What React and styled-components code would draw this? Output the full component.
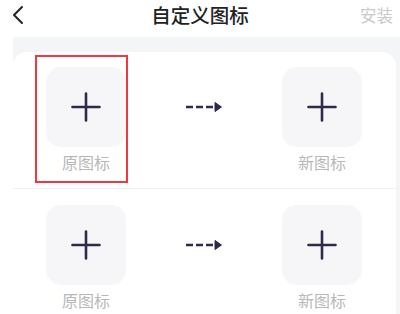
import React from "react";
import styled, { createGlobalStyle } from "styled-components";

const Global = createGlobalStyle`
  html, body { margin: 0; padding: 0; background: #ffffff; }
  body { font-family: "Noto Sans CJK SC", "Noto Sans", sans-serif; }
  * { box-sizing: border-box; }
`;

const Page = styled.div`
  width: 400px;
  height: 314px;
  overflow: hidden;
  background: #fff;
`;

const Header = styled.div`
  height: 37px;
  display: flex;
  align-items: center;
  justify-content: space-between;
  padding: 0 7px 0 11px;
  position: relative;
`;

const Title = styled.div`
  position: absolute;
  left: 0;
  right: 0;
  top: 0;
  height: 29px;
  display: flex;
  align-items: center;
  justify-content: center;
  font-size: 19.5px;
  font-weight: 500;
  color: #222;
  pointer-events: none;
`;

const Back = styled.div`
  height: 29px;
  display: flex;
  align-items: center;
  align-self: flex-start;
`;

const Install = styled.div`
  align-self: flex-start;
  height: 29px;
  display: flex;
  align-items: center;
  font-size: 16.5px;
  color: #c9c9c9;
`;

const Gray = styled.div`
  margin-left: 13px;
  background: #f4f5f7;
  padding: 15px 4px 0 0;
  height: 277px;
`;

const Card = styled.div`
  background: #fff;
  border-radius: 14px 14px 0 0;
  height: 100%;
`;

const Row = styled.div`
  height: ${(p) => p.$h}px;
  padding: ${(p) => p.$pt}px 34px 0 33px;
  display: flex;
  justify-content: space-between;
  align-items: flex-start;
  border-bottom: ${(p) => (p.$sep ? "1px solid #f1f1f3" : "none")};
`;

const Item = styled.div`
  position: relative;
  display: flex;
  flex-direction: column;
  align-items: center;
  gap: 4px;
`;

const Tile = styled.div`
  width: 80px;
  height: 80px;
  border-radius: 15px;
  background: #f6f6f9;
  display: flex;
  align-items: center;
  justify-content: center;
`;

const Label = styled.div`
  font-size: 16px;
  line-height: 22px;
  color: #b8b8b8;
`;

const ArrowBox = styled.div`
  height: 80px;
  display: flex;
  align-items: center;
`;

const Highlight = styled.div`
  position: absolute;
  left: -11px;
  top: -12px;
  width: 93px;
  height: 128px;
  border: 2.5px solid #f0393f;
  pointer-events: none;
`;

const Plus = () => (
  <svg width="30" height="30" viewBox="0 0 30 30">
    <path d="M15 1.5V28.5M1.5 15H28.5" stroke="#2d2b45" strokeWidth="2.6" strokeLinecap="round" fill="none" />
  </svg>
);

const Arrow = () => (
  <svg width="38" height="12" viewBox="0 0 38 12">
    <path d="M1 6H8M11 6H18M21 6H28" stroke="#2d2b45" strokeWidth="2.6" fill="none" />
    <path d="M30 1.5L36.5 6L30 10.5Z" fill="#2d2b45" stroke="#2d2b45" strokeWidth="1" strokeLinejoin="round" />
  </svg>
);

const Chevron = () => (
  <svg width="14" height="20" viewBox="0 0 14 20">
    <path d="M11 2L3 10L11 18" stroke="#222" strokeWidth="2" fill="none" strokeLinecap="round" strokeLinejoin="round" />
  </svg>
);

const Pair = ({ highlight, sep, pt, h }) => (
  <Row $sep={sep} $pt={pt} $h={h}>
    <Item>
      <Tile><Plus /></Tile>
      <Label>原图标</Label>
      {highlight && <Highlight />}
    </Item>
    <ArrowBox><Arrow /></ArrowBox>
    <Item>
      <Tile><Plus /></Tile>
      <Label>新图标</Label>
    </Item>
  </Row>
);

export default function App() {
  return (
    <Page>
      <Global />
      <Header>
        <Back><Chevron /></Back>
        <Title>自定义图标</Title>
        <Install>安装</Install>
      </Header>
      <Gray>
        <Card>
          <Pair highlight sep pt={15} h={137} />
          <Pair pt={16} h={130} />
        </Card>
      </Gray>
    </Page>
  );
}
